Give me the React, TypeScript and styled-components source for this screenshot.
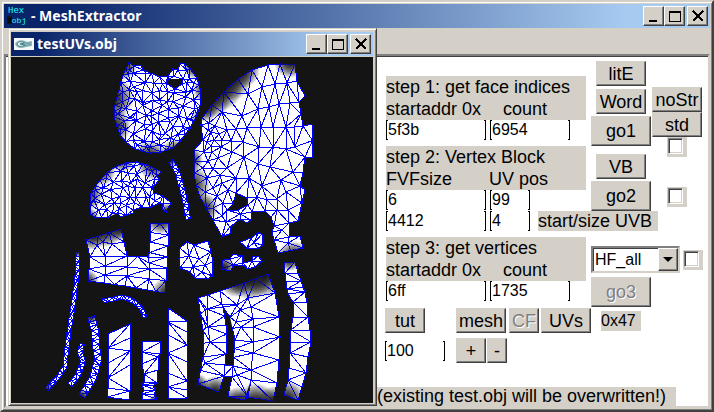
import React, { useState } from "react";
import styled, { createGlobalStyle, css } from "styled-components";

type Pt = [number, number];

const GlobalStyle = createGlobalStyle`
  * { box-sizing: border-box; }
  body { margin: 0; background: #d4d0c8; }
`;

const face = "#d4d0c8";
const uiFont = `"Liberation Sans", Arial, sans-serif`;
const raised = css`
  border: 1px solid;
  border-color: #fff #404040 #404040 #fff;
  box-shadow: inset -1px -1px 0 #808080;
`;

/* ---------- windows ---------- */

const MainWindow = styled.main`
  position: relative;
  display: flex;
  flex-direction: column;
  min-height: 100vh;
  padding: 2px;
  background: ${face};
  border: 2px solid;
  border-color: ${face} #404040 #404040 ${face};
  box-shadow: inset 1px 1px 0 #fff, inset -1px -1px 0 #808080;
  font: 18px/22px ${uiFont};
  color: #000;
`;

const TitleBar = styled.header`
  display: flex;
  align-items: center;
  height: 24px;
  padding: 0 2px 0 3px;
  background: linear-gradient(90deg, #0a246a 8%, #a6caf0 88%);
`;

const Title = styled.h1<{ $gap: number }>`
  flex: 1;
  margin: 0 0 0 ${(p) => p.$gap}px;
  font: bold 14px/22px "Noto Sans", Tahoma, sans-serif;
  color: #fff;
  white-space: nowrap;
`;

const CaptionButton = styled.button<{ $apart?: boolean }>`
  ${raised}
  display: grid;
  place-items: center;
  width: 21px;
  height: 20px;
  padding: 0;
  margin-left: ${(p) => (p.$apart ? 2 : 0)}px;
  background: ${face};
`;

const Client = styled.section`
  flex: 1;
  display: flex;
  flex-direction: column;
  margin-top: 26px;
  padding: 5px 0 0 379px;
  background: #fff;
  border: 2px solid;
  border-color: #808080 ${face} ${face} #808080;
  box-shadow: inset 0 1px 0 #404040;
`;

const ChildWindow = styled.section`
  position: absolute;
  left: 6px;
  top: 26px;
  padding: 3px 3px 2px 2px;
  background: ${face};
  border: 1px solid;
  border-color: ${face} #404040 #404040 ${face};
  box-shadow: inset 1px 1px 0 #fff, inset -1px -1px 0 #808080;
`;

const Viewport = styled.svg`
  display: block;
  margin-top: 1px;
  background: #141414;
`;

/* ---------- form ---------- */

const StepsGrid = styled.div`
  display: grid;
  grid-template-columns: 205px 60px 50px;
  column-gap: 1px;
`;

const Steps = styled.div`
  display: flex;
  flex-direction: column;
  gap: 5px;
  padding: 15px 0 0 1px;
`;

const Column = styled.div`
  display: flex;
  flex-direction: column;
  align-items: center;
`;

const Step = styled.fieldset`
  margin: 0;
  padding: 0;
  border: 0;
  min-width: 0;
`;

const StepHead = styled.div<{ $second: number }>`
  display: grid;
  grid-template-columns: ${(p) => p.$second}px 1fr;
  width: 200px;
  height: 44px;
  background: ${face};
  white-space: nowrap;
`;

const StepTitle = styled.span`
  grid-column: 1 / -1;
`;

const Fields = styled.div`
  display: flex;
  gap: 4px;
  height: 21px;
  white-space: nowrap;
`;

const BracketBox = styled.span<{ $w: number }>`
  flex: none;
  display: block;
  width: ${(p) => p.$w}px;
  height: 20px;
  --ink: linear-gradient(#000, #000);
  background: var(--ink) 0 0 / 1px 100%, var(--ink) 100% 0 / 1px 100%,
    var(--ink) 0 0 / 2px 1px, var(--ink) 0 100% / 2px 1px,
    var(--ink) 100% 0 / 2px 1px, var(--ink) 100% 100% / 2px 1px;
  background-repeat: no-repeat;
`;

const BracketInput = styled.input`
  display: block;
  width: 100%;
  height: 20px;
  padding: 0 2px;
  border: 0;
  outline: 0;
  background: transparent;
  font: 16px/20px ${uiFont};
  color: inherit;
`;

const Note = styled.span<{ $w: number; $small?: boolean }>`
  flex: none;
  width: ${(p) => p.$w}px;
  height: 20px;
  font-size: ${(p) => (p.$small ? 16 : 18)}px;
  line-height: 20px;
  background: ${face};
  white-space: nowrap;
`;

const PushButton = styled.button<{ $w: number; $h?: number; $top?: number }>`
  flex: none;
  width: ${(p) => p.$w}px;
  height: ${(p) => p.$h ?? 25}px;
  margin: ${(p) => p.$top ?? 0}px 0 0;
  padding: 0;
  background: ${face};
  border: 1px solid;
  border-color: ${face} #404040 #404040 ${face};
  box-shadow: inset -1px -1px 0 #808080;
  font: inherit;
  line-height: 20px;
  color: #000;
  overflow: hidden;
  white-space: nowrap;
  &:disabled {
    color: #808080;
    text-shadow: 1px 1px 0 #fff;
  }
`;

const CheckCell = styled.label<{ $top: number }>`
  display: block;
  flex: none;
  width: 20px;
  height: 20px;
  margin-top: ${(p) => p.$top}px;
  padding: 1px;
  background: ${face};
`;

const CheckBox = styled.input`
  appearance: none;
  display: block;
  width: 15px;
  height: 16px;
  margin: 0;
  background: #fff;
  border: 1px solid;
  border-color: #808080 #fff #fff #808080;
  box-shadow: inset 1px 1px 0 #404040, inset -1px -1px 0 ${face};
  &:checked { background: #000; }
`;

const ComboRow = styled.div`
  display: flex;
  align-items: center;
  align-self: flex-start;
  gap: 3px;
  margin-top: 35px;
  width: 112px;
`;

const Combo = styled.div`
  display: grid;
  flex: none;
  grid-template-columns: 1fr 20px;
  width: 89px;
  height: 27px;
  background: #fff;
  border: 2px solid;
  border-color: #808080 ${face} ${face} #808080;
  box-shadow: inset 1px 1px 0 #404040;
`;

const ComboSelect = styled.select`
  appearance: none;
  grid-area: 1 / 1 / 2 / 3;
  width: 100%;
  padding: 0 2px;
  border: 0;
  outline: 0;
  background: transparent;
  font: 16px/22px ${uiFont};
  color: inherit;
`;

const ComboArrow = styled.span`
  ${raised}
  grid-area: 1 / 2;
  display: grid;
  place-items: center;
  background: ${face};
  pointer-events: none;
`;

const ToolRow = styled.div<{ $top: number }>`
  display: flex;
  align-items: center;
  margin-top: ${(p) => p.$top}px;
`;

const Spacer = styled.span<{ $w: number }>`
  flex: none;
  width: ${(p) => p.$w}px;
`;

const Status = styled.p`
  flex: none;
  width: 301px;
  height: 19px;
  margin: auto 0 0 -10px;
  padding-left: 2px;
  line-height: 19px;
  background: ${face};
  white-space: nowrap;
`;

/* ---------- mesh drawing ---------- */

interface Shape {
  outline: Pt[];
  hole?: Pt[];
  inner?: Pt[];
  step?: number;
  fill?: number;
  shades?: [number, number, number][];
}

const area: Shape[] = [
  {
    outline: [[129, 63], [134, 66], [141, 65], [143, 70], [160, 77], [168, 76], [173, 69], [178, 70], [180, 64], [184, 63], [190, 69], [197, 78], [201, 92], [200, 106], [197, 115], [190, 128], [180, 141], [173, 148], [161, 152], [150, 153], [135, 149], [126, 142], [120, 135], [114, 117], [115, 105], [117, 97], [123, 75]],
    hole: [[166, 83], [169, 79], [183, 79], [182, 84], [175, 89]],
    step: 8, fill: 8,
    shades: [[112, 98, 22], [113, 126, 18], [150, 158, 17], [176, 155, 16], [206, 90, 13], [196, 66, 13], [203, 120, 12], [123, 66, 14]],
  },
  {
    outline: [[202, 118], [212, 105], [224, 92], [238, 79], [252, 70], [268, 65], [280, 64], [295, 64], [297, 81], [305, 96], [299, 102], [301, 114], [303, 126], [312, 124], [313, 157], [305, 157], [303, 172], [300, 186], [305, 190], [302, 203], [298, 221], [289, 223], [289, 237], [300, 236], [303, 248], [278, 253], [274, 240], [272, 232], [274, 226], [271, 217], [265, 211], [252, 212], [251, 220], [247, 223], [240, 219], [230, 227], [231, 233], [222, 237], [213, 220], [200, 197], [196, 185], [194, 173], [194, 150], [203, 140], [201, 125]],
    hole: [[236, 193], [247, 198], [248, 205], [238, 210], [227, 210], [233, 204]],
    inner: [[248, 94], [262, 87], [275, 84], [287, 83], [222, 112], [242, 116], [258, 109], [269, 107], [279, 104], [290, 103], [227, 130], [236, 129], [247, 128], [261, 127], [273, 127], [286, 127], [294, 127], [243, 142], [259, 147], [273, 147], [286, 149], [295, 147], [232, 152], [244, 157], [270, 167], [293, 172], [227, 168], [249, 178], [262, 186], [286, 192], [267, 200], [288, 210], [277, 210], [240, 214], [282, 230], [222, 183], [209, 123], [215, 126], [211, 132], [219, 134], [207, 142], [214, 140], [221, 147], [204, 152], [212, 152], [218, 158], [208, 161], [203, 168], [213, 169], [220, 175], [207, 178], [213, 188], [205, 192], [228, 190], [217, 196], [223, 203], [213, 208], [222, 216], [226, 222], [288, 243], [257, 197], [277, 199], [281, 180], [236, 178], [258, 164], [231, 141], [222, 140], [211, 146], [208, 130]],
    step: 14,
    shades: [[211, 98, 20], [220, 88, 23], [230, 79, 22], [242, 70, 18], [290, 62, 16], [190, 185, 20], [203, 208, 15], [190, 160, 13], [294, 258, 17], [204, 108, 14]],
  },
  {
    outline: [[91, 215], [90, 204], [91, 193], [100, 180], [107, 173], [115, 167], [126, 163], [136, 162], [150, 166], [162, 172], [157, 175], [159, 180], [155, 185], [152, 187], [154, 193], [163, 196], [171, 203], [166, 212], [162, 209], [163, 204], [160, 203], [150, 207], [142, 207], [133, 210], [133, 213], [120, 217], [118, 213], [108, 217], [95, 217]],
    step: 8, fill: 8,
    shades: [[86, 194, 17], [100, 170, 16], [122, 158, 14], [154, 163, 17], [168, 213, 10], [89, 218, 10]],
  },
  {
    outline: [[86, 240], [121, 229], [124, 242], [127, 256], [148, 257], [149, 263], [150, 242], [151, 223], [169, 224], [167, 268], [165, 293], [147, 290], [125, 286], [104, 283], [88, 281], [90, 257]],
    inner: [[103, 242], [105, 256], [105, 266], [105, 275], [127, 267], [127, 276], [149, 269], [149, 279], [97, 245], [112, 244]],
    step: 12,
    shades: [[92, 235, 15], [106, 230, 17], [86, 282, 13], [168, 294, 17], [161, 219, 15], [120, 228, 13]],
  },
  {
    outline: [[180, 248], [187, 242], [194, 245], [208, 241], [211, 252], [213, 262], [212, 276], [207, 279], [195, 278], [190, 272], [180, 268], [179, 258]],
    inner: [[193, 267], [199, 259], [205, 265], [189, 256], [202, 272]],
    step: 12,
  },
  {
    outline: [[240, 242], [251, 238], [258, 233], [262, 234], [263, 245], [258, 248], [247, 248]],
    inner: [[254, 243]], step: 9,
  },
  {
    outline: [[223, 260], [230, 259], [233, 254], [242, 256], [243, 263], [252, 261], [252, 256], [258, 256], [262, 261], [255, 267], [248, 269], [242, 265], [233, 265], [231, 271], [222, 269]],
    step: 8, shades: [[223, 268, 12]],
  },
  {
    outline: [[198, 298], [208, 295], [220, 291], [244, 283], [268, 274], [275, 293], [279, 317], [280, 337], [279, 360], [277, 383], [273, 401], [248, 397], [251, 380], [244, 400], [228, 396], [232, 377], [224, 376], [219, 392], [198, 384], [203, 357], [203, 330]],
    hole: [[223, 307], [230, 317], [235, 340], [233, 366], [225, 365], [227, 343], [226, 325]],
    inner: [[205, 310], [208, 327], [210, 342], [205, 363], [222, 304], [248, 298], [251, 307], [253, 319], [253, 327], [253, 342], [253, 353], [251, 370], [236, 322], [241, 327], [240, 310], [237, 305], [237, 375], [207, 309], [206, 327]],
    step: 17,
    shades: [[236, 281, 16], [250, 278, 22], [264, 275, 22], [215, 393, 17], [196, 386, 13], [238, 402, 15], [256, 403, 20], [274, 403, 17]],
  },
];

const rails: { left: Pt[]; right: Pt[]; shades?: [number, number, number][] }[] = [
  {
    left: [[284, 262], [285, 273], [286, 282], [287, 289], [288, 294], [293, 302], [293, 317], [291, 330], [290, 342], [290, 353], [289, 368], [288, 380], [284, 395]],
    right: [[295, 262], [298, 273], [301, 281], [303, 287], [305, 292], [307, 303], [308, 317], [310, 330], [311, 342], [308, 357], [306, 373], [302, 387], [298, 400]],
    shades: [[290, 259, 12], [286, 400, 20]],
  },
  {
    left: [[108, 334], [108, 348], [108, 363], [108, 378], [108, 388], [107, 397]],
    right: [[130, 324], [130, 338], [130, 351], [130, 365], [130, 391], [129, 400]],
  },
  {
    left: [[142, 341], [142, 352], [142, 364], [144, 374], [144, 382], [142, 385], [144, 390], [142, 394], [142, 400]],
    right: [[161, 342], [160, 354], [158, 357], [158, 370], [157, 383], [153, 386], [156, 390], [154, 395], [157, 399]],
    shades: [[155, 402, 7]],
  },
  {
    left: [[168, 308], [168, 322], [168, 335], [168, 353], [168, 373], [168, 387], [168, 398]],
    right: [[187, 321], [187, 332], [187, 345], [187, 362], [187, 381], [187, 390], [187, 398]],
  },
];

const ribbons: { line: Pt[]; width: number; shades?: [number, number, number][] }[] = [
  { line: [[171, 161], [177, 171], [181, 185], [185, 200], [188, 219]], width: 5, shades: [[170, 160, 8]] },
  { line: [[77, 252], [77, 275], [74, 300], [70, 325], [68, 340], [66, 355], [65, 367], [58, 377], [47, 389]], width: 4, shades: [[45, 390, 10], [77, 251, 7]] },
  { line: [[82, 344], [80, 352], [83, 362], [78, 375], [70, 385]], width: 5 },
  { line: [[91, 317], [95, 330], [96, 345], [98, 360], [93, 378], [82, 396]], width: 7, shades: [[90, 316, 9], [81, 397, 9]] },
  { line: [[103, 301], [113, 299], [123, 297], [133, 301], [141, 308], [145, 317]], width: 4 },
];

const inside = (p: Pt, poly: Pt[]) => {
  let hit = false;
  for (let i = 0, j = poly.length - 1; i < poly.length; j = i++) {
    const [xi, yi] = poly[i];
    const [xj, yj] = poly[j];
    if (yi > p[1] !== yj > p[1] && p[0] < ((xj - xi) * (p[1] - yi)) / (yj - yi) + xi) hit = !hit;
  }
  return hit;
};

const subdivide = (poly: Pt[], step: number): Pt[] =>
  poly.flatMap((a, i) => {
    const b = poly[(i + 1) % poly.length];
    const n = Math.max(1, Math.round(Math.hypot(b[0] - a[0], b[1] - a[1]) / step));
    return Array.from({ length: n }, (_, k): Pt => [a[0] + ((b[0] - a[0]) * k) / n, a[1] + ((b[1] - a[1]) * k) / n]);
  });

const scatter = (shape: Shape, edge: Pt[]): Pt[] => {
  const pts: Pt[] = [];
  const d = shape.fill;
  if (!d) return pts;
  let seed = 11;
  const rnd = () => ((seed = (seed * 16807) % 2147483647) / 2147483647 - 0.5) * d * 0.8;
  for (let y = 60; y < 220; y += d)
    for (let x = 88; x < 204; x += d) {
      const p: Pt = [x + rnd(), y + rnd()];
      if (inside(p, shape.outline) && !(shape.hole && inside(p, shape.hole)) && edge.every((e) => Math.hypot(e[0] - p[0], e[1] - p[1]) > 3)) pts.push(p);
    }
  return pts;
};

/* Bowyer-Watson triangulation */
const triangulate = (src: Pt[]): [number, number, number][] => {
  const pts: Pt[] = src.map(([x, y], i) => [x + ((i * 37) % 11) / 500, y + ((i * 53) % 13) / 500]);
  const n = pts.length;
  pts.push([-4000, -4000], [4000, -4000], [0, 6000]);
  let tris: [number, number, number][] = [[n, n + 1, n + 2]];
  const holds = (t: [number, number, number], p: Pt) => {
    const [a, b, c] = t.map((i) => pts[i]);
    const d = 2 * (a[0] * (b[1] - c[1]) + b[0] * (c[1] - a[1]) + c[0] * (a[1] - b[1]));
    const s = (q: Pt) => q[0] * q[0] + q[1] * q[1];
    const ux = (s(a) * (b[1] - c[1]) + s(b) * (c[1] - a[1]) + s(c) * (a[1] - b[1])) / d;
    const uy = (s(a) * (c[0] - b[0]) + s(b) * (a[0] - c[0]) + s(c) * (b[0] - a[0])) / d;
    return Math.hypot(p[0] - ux, p[1] - uy) < Math.hypot(a[0] - ux, a[1] - uy);
  };
  for (let i = 0; i < n; i++) {
    const bad = tris.filter((t) => holds(t, pts[i]));
    const edges = new Map<string, [number, number] | null>();
    bad.forEach(([a, b, c]) =>
      ([[a, b], [b, c], [c, a]] as [number, number][]).forEach(([u, v]) => {
        const key = u < v ? `${u}_${v}` : `${v}_${u}`;
        edges.set(key, edges.has(key) ? null : [u, v]);
      })
    );
    tris = tris.filter((t) => !bad.includes(t));
    edges.forEach((e) => e && tris.push([e[0], e[1], i]));
  }
  return tris.filter((t) => t.every((i) => i < n));
};

const toPath = (pts: Pt[]) => `M${pts.map((p) => `${p[0].toFixed(1)} ${p[1].toFixed(1)}`).join("L")}Z`;

interface Piece {
  body: string;
  wires: string;
  shades: [number, number, number][];
}

const fromArea = (s: Shape): Piece => {
  const edge = [...subdivide(s.outline, s.step ?? 12), ...(s.hole ? subdivide(s.hole, 10) : [])];
  const pts = [...edge, ...(s.inner ?? []), ...scatter(s, edge)];
  const wires = triangulate(pts)
    .filter((t) => {
      const c: Pt = [0, 1].map((k) => (pts[t[0]][k] + pts[t[1]][k] + pts[t[2]][k]) / 3) as Pt;
      return inside(c, s.outline) && !(s.hole && inside(c, s.hole));
    })
    .map((t) => toPath(t.map((i) => pts[i])))
    .join("");
  return { body: toPath(s.outline) + (s.hole ? toPath(s.hole) : ""), wires, shades: s.shades ?? [] };
};

const fromRails = (left: Pt[], right: Pt[], shades: [number, number, number][] = []): Piece => {
  const body = toPath([...left, ...[...right].reverse()]);
  let wires = body;
  for (let i = 0; i + 1 < left.length; i++) {
    wires += toPath([left[i], right[i]]);
    wires += i % 2 ? toPath([left[i], right[i + 1]]) : toPath([right[i], left[i + 1]]);
  }
  return { body, wires, shades };
};

const fromRibbon = (line: Pt[], width: number, shades?: [number, number, number][]): Piece => {
  const mid = subdivide(line, 5);
  const last = line[line.length - 1];
  const path = mid.slice(0, mid.findIndex((p) => p[0] === last[0] && p[1] === last[1]) + 1);
  const side = (k: number): Pt[] =>
    path.map((p, i) => {
      const a = path[Math.max(0, i - 1)];
      const b = path[Math.min(path.length - 1, i + 1)];
      const len = Math.hypot(b[0] - a[0], b[1] - a[1]) || 1;
      return [p[0] - ((b[1] - a[1]) / len) * k, p[1] + ((b[0] - a[0]) / len) * k];
    });
  return fromRails(side(width / 2), side(-width / 2), shades);
};

const pieces: Piece[] = [
  ...area.map(fromArea),
  ...rails.map((r) => fromRails(r.left, r.right, r.shades)),
  ...ribbons.map((r) => fromRibbon(r.line, r.width, r.shades)),
];

const UvMesh = () => (
  <Viewport width="362" height="346" viewBox="11 57 362 346" role="img" aria-label="UV layout">
    <defs>
      <radialGradient id="shade">
        <stop offset="0.1" stopColor="#141414" stopOpacity="0.9" />
        <stop offset="0.55" stopColor="#141414" stopOpacity="0.45" />
        <stop offset="1" stopColor="#141414" stopOpacity="0" />
      </radialGradient>
      {pieces.map((p, i) => (
        <clipPath id={`piece${i}`} key={i}>
          <path d={p.body} clipRule="evenodd" />
        </clipPath>
      ))}
    </defs>
    {pieces.map((p, i) => (
      <g key={i}>
        <path d={p.body} fill="#fff" fillRule="evenodd" />
        <g clipPath={`url(#piece${i})`}>
          {p.shades.map(([x, y, r], k) => (
            <circle key={k} cx={x} cy={y} r={r} fill="url(#shade)" />
          ))}
        </g>
        <path d={p.wires} fill="none" stroke="#0000ff" strokeWidth="1" shapeRendering="crispEdges" />
        <g opacity="0.6">
          {p.shades.map(([x, y, r], k) => (
            <circle key={k} cx={x} cy={y} r={r} fill="url(#shade)" clipPath={`url(#piece${i})`} />
          ))}
        </g>
      </g>
    ))}
  </Viewport>
);

/* ---------- small parts ---------- */

const AppIcon = () => (
  <svg width="20" height="22" viewBox="0 0 20 22" aria-hidden="true">
    <rect x="0" y="11" width="5" height="8" fill="#101820" />
    <g fontFamily="Liberation Mono, monospace" fill="#2ff">
      <text x="1" y="8" fontSize="9">Hex</text>
      <text x="0" y="18" fontSize="8">
        <tspan fill="#000" fontWeight="bold">2</tspan>obj
      </text>
    </g>
  </svg>
);

const ViewerIcon = () => (
  <svg width="20" height="12" viewBox="0 0 20 12" aria-hidden="true">
    <rect width="20" height="12" fill="#f4f8f8" />
    <path d="M1 6C2 2 9 1 13 4L18 3V8L12 9C7 11 2 10 1 6Z" fill="#8fb8ba" />
    <path d="M3 6C4 3 8 3 10 5L6 6L11 7C8 9 4 9 3 6Z" fill="#e4f0f0" stroke="#437f86" />
    <path d="M10 5H17M11 8L17 6" stroke="#6d9da2" fill="none" />
  </svg>
);

const CaptionButtons = () => (
  <>
    <CaptionButton aria-label="Minimize">
      <svg width="12" height="12" shapeRendering="crispEdges"><path d="M1 10h8v2H1z" /></svg>
    </CaptionButton>
    <CaptionButton aria-label="Maximize">
      <svg width="12" height="12" shapeRendering="crispEdges"><path fillRule="evenodd" d="M0 1h12v11H0zM1 3v8h10V3z" /></svg>
    </CaptionButton>
    <CaptionButton aria-label="Close" $apart>
      <svg width="12" height="12" shapeRendering="crispEdges"><path d="M1 1L11 11M11 1L1 11" stroke="#000" strokeWidth="2" /></svg>
    </CaptionButton>
  </>
);

const Field = ({ label, value, w }: { label: string; value: string; w: number }) => {
  const [text, setText] = useState(value);
  return (
    <BracketBox $w={w}>
      <BracketInput aria-label={label} value={text} onChange={(e) => setText(e.target.value)} />
    </BracketBox>
  );
};

const Heading = ({ title, first, second, at }: { title: string; first: string; second: string; at: number }) => (
  <StepHead $second={at}>
    <StepTitle>{title}</StepTitle>
    <span>{first}</span>
    <span>{second}</span>
  </StepHead>
);

const Check = ({ label, top }: { label: string; top: number }) => (
  <CheckCell $top={top}>
    <CheckBox type="checkbox" aria-label={label} />
  </CheckCell>
);

export default function App() {
  return (
    <>
      <GlobalStyle />
      <MainWindow>
        <TitleBar>
          <AppIcon />
          <Title $gap={4}>- MeshExtractor</Title>
          <CaptionButtons />
        </TitleBar>
        <Client>
          <StepsGrid>
            <Steps>
              <Step>
                <Heading title="step 1: get face indices" first="startaddr 0x" second="count" at={117} />
                <Fields>
                  <Field label="Face start address" value="5f3b" w={100} />
                  <Field label="Face count" value="6954" w={80} />
                </Fields>
              </Step>
              <Step>
                <Heading title="step 2: Vertex Block" first="FVFsize" second="UV pos" at={103} />
                <Fields>
                  <Field label="FVF size" value="6" w={100} />
                  <Field label="UV position" value="99" w={40} />
                </Fields>
                <Fields>
                  <Field label="UVB start" value="4412" w={100} />
                  <Field label="UVB size" value="4" w={40} />
                  <Spacer $w={0} />
                  <Note $w={120}>start/size UVB</Note>
                </Fields>
              </Step>
              <Step>
                <Heading title="step 3: get vertices" first="startaddr 0x" second="count" at={117} />
                <Fields>
                  <Field label="Vertex start address" value="6ff" w={100} />
                  <Field label="Vertex count" value="1735" w={80} />
                </Fields>
              </Step>
            </Steps>
            <Column>
              <PushButton $w={50}>litE</PushButton>
              <PushButton $w={50} $top={3}>Word</PushButton>
              <PushButton $w={60} $h={30} $top={2}>go1</PushButton>
              <PushButton $w={50} $top={8}>VB</PushButton>
              <PushButton $w={60} $h={30} $top={2}>go2</PushButton>
              <ComboRow>
                <Combo>
                  <ComboSelect aria-label="Vertex format" defaultValue="HF_all">
                    <option>HF_all</option>
                  </ComboSelect>
                  <ComboArrow>
                    <svg width="10" height="5"><path d="M0 0h10L5 5z" /></svg>
                  </ComboArrow>
                </Combo>
                <Check label="Format option" top={0} />
              </ComboRow>
              <PushButton $w={60} $h={30} $top={4} disabled>go3</PushButton>
            </Column>
            <Column>
              <PushButton $w={50} $top={26}>noStr</PushButton>
              <PushButton $w={50}>std</PushButton>
              <Check label="Standard option" top={0} />
              <Check label="Block option" top={30} />
            </Column>
          </StepsGrid>
          <ToolRow $top={1}>
            <PushButton $w={40}>tut</PushButton>
            <Spacer $w={31} />
            <PushButton $w={50}>mesh</PushButton>
            <Spacer $w={3} />
            <PushButton $w={30} disabled>CF</PushButton>
            <Spacer $w={2} />
            <PushButton $w={50}>UVs</PushButton>
            <Spacer $w={10} />
            <Note $w={40} $small>0x47</Note>
          </ToolRow>
          <ToolRow $top={5}>
            <Field label="Scale" value="100" w={60} />
            <Spacer $w={11} />
            <PushButton $w={30}>+</PushButton>
            <Spacer $w={1} />
            <PushButton $w={20}>-</PushButton>
          </ToolRow>
          <Status>(existing test.obj will be overwritten!)</Status>
        </Client>
        <ChildWindow>
          <TitleBar>
            <ViewerIcon />
            <Title $gap={3}>testUVs.obj</Title>
            <CaptionButtons />
          </TitleBar>
          <UvMesh />
        </ChildWindow>
      </MainWindow>
    </>
  );
}
